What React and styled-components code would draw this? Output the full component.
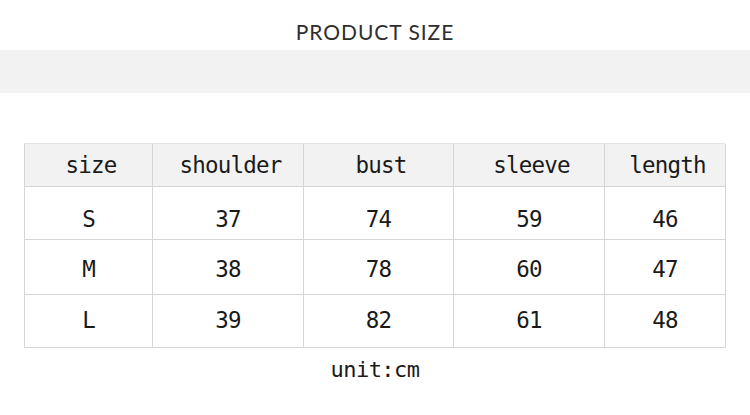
import React from 'react'
import styled, { createGlobalStyle } from 'styled-components'

const columns = ['size', 'shoulder', 'bust', 'sleeve', 'length']

const rows = [
  { label: 'S', values: [37, 74, 59, 46], height: 53, shift: 11 },
  { label: 'M', values: [38, 78, 60, 47], height: 55, shift: 4 },
  { label: 'L', values: [39, 82, 61, 48], height: 54, shift: -3 },
]

export default function App() {
  return (
    <Page>
      <GlobalStyle />
      <Title>PRODUCT SIZE</Title>
      <Band />
      <TableWrap>
        <Table>
          {columns.map((c) => (
            <HeadCell key={c}>{c}</HeadCell>
          ))}
          {rows.map((r) => (
            <React.Fragment key={r.label}>
              <Cell $h={r.height} $shift={r.shift}>{r.label}</Cell>
              {r.values.map((v, i) => (
                <Cell key={i} $h={r.height} $shift={r.shift}>{v}</Cell>
              ))}
            </React.Fragment>
          ))}
        </Table>
      </TableWrap>
      <Unit>unit:cm</Unit>
    </Page>
  )
}

const GlobalStyle = createGlobalStyle`
  html, body {
    margin: 0;
    padding: 0;
    background: #ffffff;
  }
  * {
    box-sizing: border-box;
  }
`

const Page = styled.div`
  width: 750px;
  height: 415px;
  background: #ffffff;
  overflow: hidden;
  display: flex;
  flex-direction: column;
`

const Title = styled.div`
  height: 50px;
  padding-top: 20px;
  text-align: center;
  font-family: 'Lato', 'Open Sans', sans-serif;
  font-weight: 400;
  font-size: 21px;
  line-height: 24px;
  letter-spacing: 0.95px;
  color: #2e2e2e;
`

const Band = styled.div`
  height: 43px;
  background: #f2f2f2;
`

const TableWrap = styled.div`
  padding: 50px 25px 0 24px;
`

const Table = styled.div`
  display: grid;
  grid-template-columns: 128px 151px 150px 151px 121px;
  border-left: 1px solid #d6d6d6;
  border-top: 1px solid #e4e4e4;
  font-family: 'DejaVu Sans Mono', 'Liberation Mono', monospace;
  font-size: 22.5px;
  letter-spacing: -0.8px;
  color: #1a1a1a;
`

const HeadCell = styled.div`
  height: 42px;
  background: #f2f2f2;
  border-right: 1px solid #d6d6d6;
  display: flex;
  align-items: center;
  justify-content: center;
  padding-left: 5px;
`

const Cell = styled.div`
  height: ${(p) => p.$h}px;
  border-right: 1px solid #d6d6d6;
  border-top: 1px solid #d6d6d6;
  display: flex;
  align-items: center;
  justify-content: center;
  padding-top: ${(p) => Math.max(p.$shift, 0)}px;
  padding-bottom: ${(p) => Math.max(-p.$shift, 0)}px;
  &:nth-last-child(-n + 5) {
    border-bottom: 1px solid #d6d6d6;
  }
`

const Unit = styled.div`
  margin-top: 10px;
  text-align: center;
  font-family: 'DejaVu Sans Mono', 'Liberation Mono', monospace;
  font-size: 22px;
  letter-spacing: -0.5px;
  line-height: 24px;
  color: #1a1a1a;
`
